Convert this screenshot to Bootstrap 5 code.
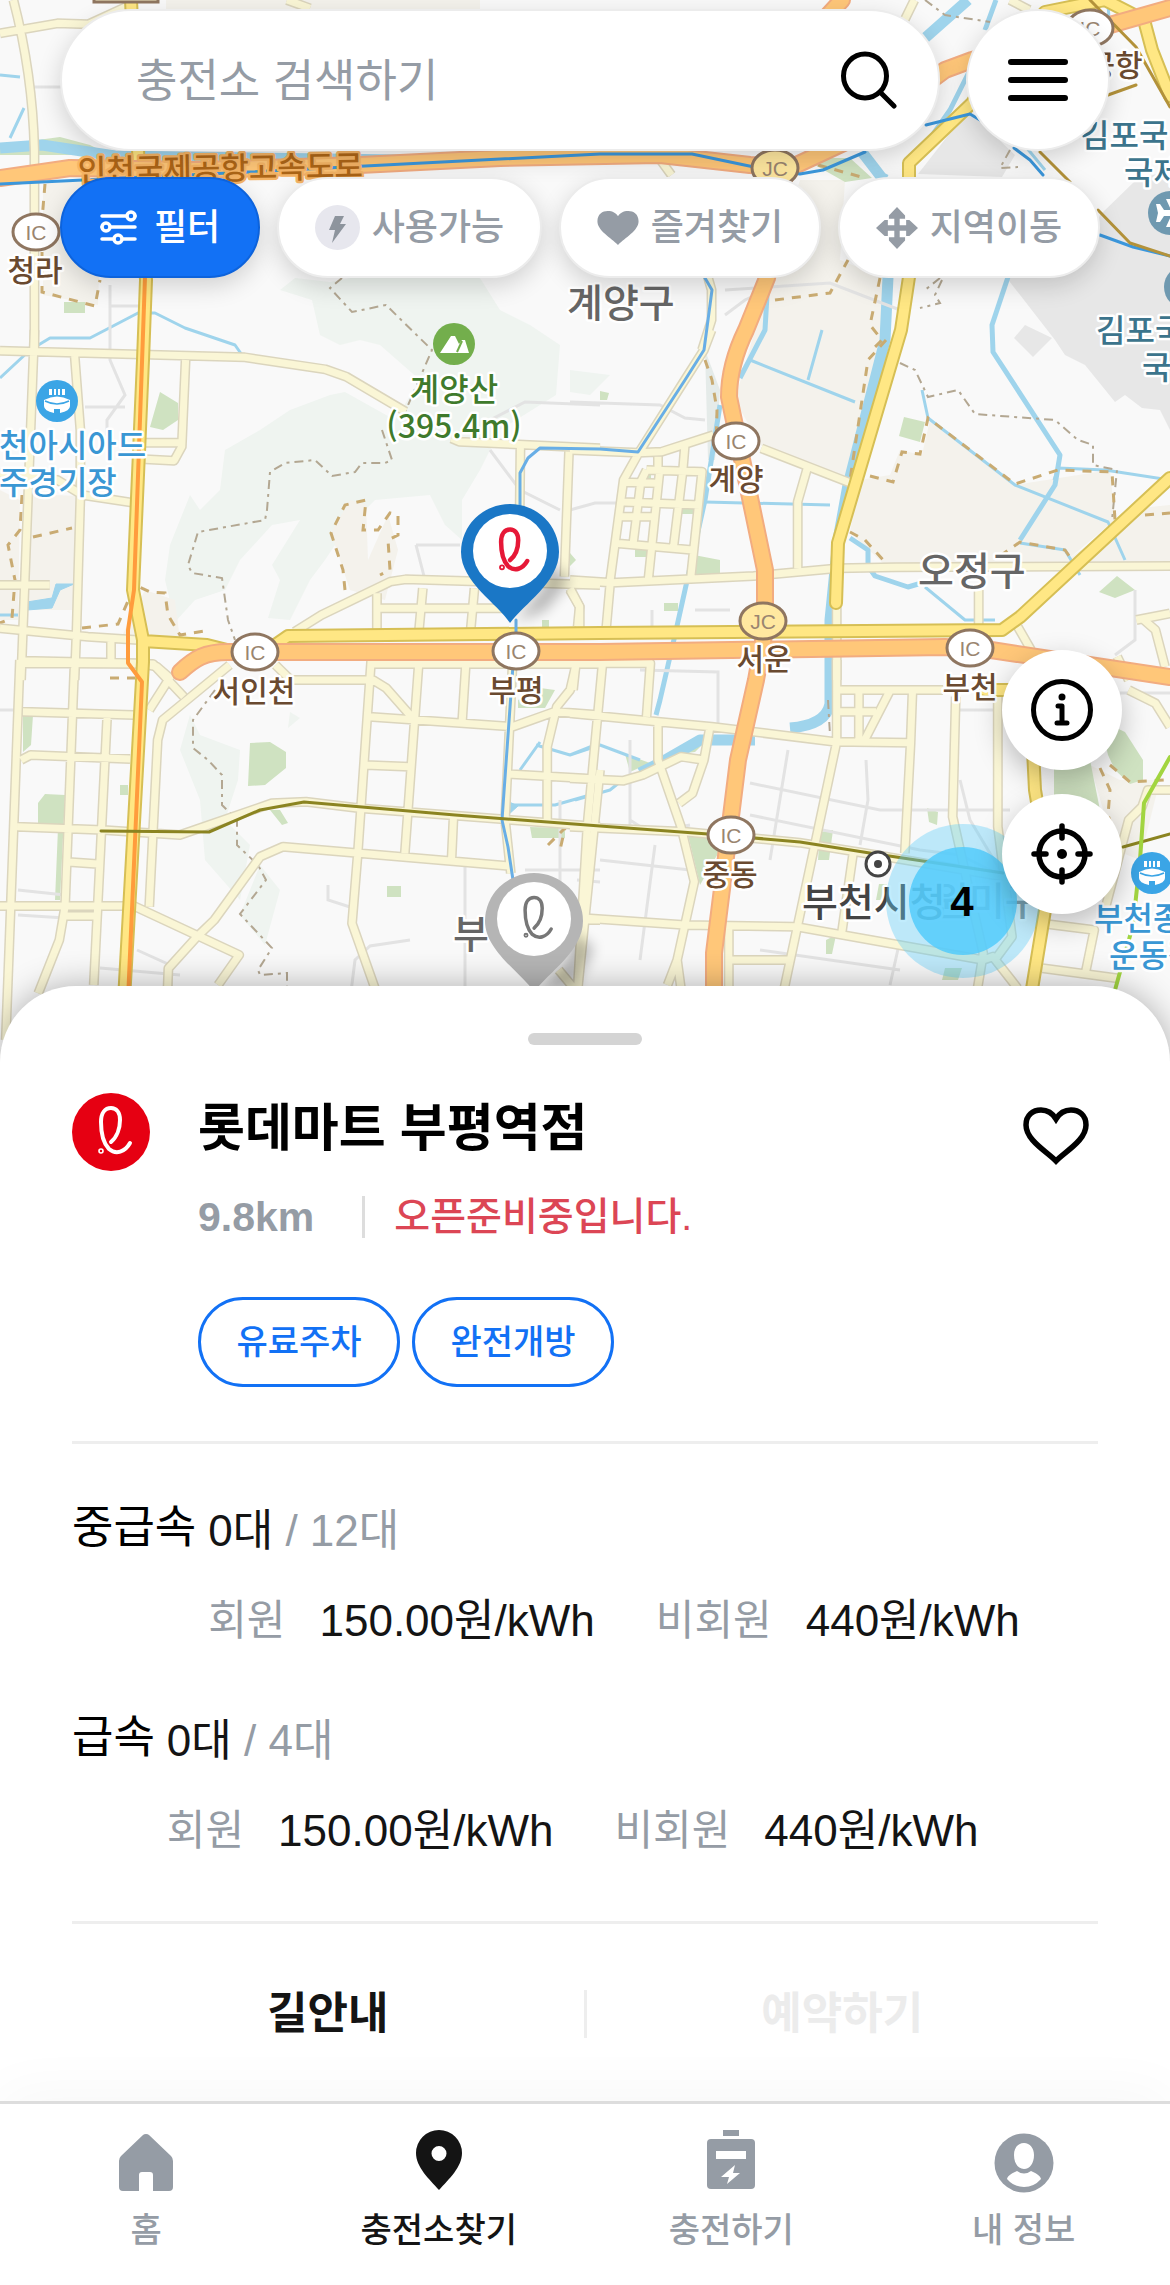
<!DOCTYPE html>
<html lang="ko">
<head>
<meta charset="utf-8">
<meta name="viewport" content="width=device-width, initial-scale=1">
<title>충전소찾기</title>
<link href="https://cdn.jsdelivr.net/npm/bootstrap@5.3.0/dist/css/bootstrap.min.css" rel="stylesheet">
<style>
  :root { --blue: #1271f5; --gray: #959ca5; --ink: #141414; --line: #eee; }
  body { font-family: "Liberation Sans", "Noto Sans CJK KR", sans-serif; color: var(--ink); background: #fff; }
  button, input { font-family: inherit; }
  button:focus-visible { outline: 3px solid var(--blue); }

  /* map canvas */
  .map-area { background: #f9f9f9; overflow: hidden; }
  .map-area > svg { display: block; width: 100%; height: auto; font-family: "Noto Sans CJK KR", sans-serif; }
  .map-area path { vector-effect: non-scaling-stroke; }
  .lbl text { font-size: 30px; font-weight: 500; paint-order: stroke; stroke: #fff; stroke-width: 5px; stroke-linejoin: round; }
  .lbl .poi text { font-size: 32px; }
  .lbl .gu { font-size: 39px; }
  .ramp { font: 21px "Liberation Sans", sans-serif; text-anchor: middle; fill: #9a8570; }

  /* floating controls */
  .topbar { padding: 9px 60px 0; }
  .search-row { gap: 26px; margin-bottom: 26px; }
  .floating { background: #fff; border: 2px solid #ececec; box-shadow: 0 8px 24px rgba(0,0,0,.16); }
  .search-pill { height: 142px; padding: 0 40px 0 74px; }
  .search-pill input { font-size: 45px; line-height: 64px; padding: 4px 0 0; color: var(--ink); }
  .search-pill input::placeholder { color: var(--gray); opacity: 1; }
  .menu-btn { width: 144px; height: 142px; }
  .chips { gap: 17px; padding-right: 10px; }
  .chip { height: 101px; font-size: 36px; line-height: 52px; font-weight: 500; color: var(--gray); gap: 12px; }
  .chip-on { width: 200px; background: var(--blue); border-color: #0d63dc; color: #fff; gap: 17px; }
  .map-tools { top: 650px; right: 48px; gap: 24px; }
  .tool { width: 120px; height: 120px; background: #fff; box-shadow: 0 10px 28px rgba(0,0,0,.25); }

  /* bottom sheet */
  .sheet { margin-top: -76px; padding: 47px 72px 0; border-radius: 76px 76px 0 0; background: #fff; box-shadow: 0 0 34px rgba(0,0,0,.3); }
  .grip { width: 114px; height: 12px; background: #d4d4d4; }
  .station { margin-top: 48px; gap: 48px; }
  .station h1 { font-size: 51px; line-height: 72px; color: #000; }
  .meta { margin-top: 31px; line-height: 42px; }
  .dist { font-size: 41px; color: var(--gray); }
  .bar { width: 3px; height: 42px; background: #ddd; margin: 0 29px 0 48px; }
  .state { font-size: 39px; font-weight: 500; color: #dc4655; }
  .tags { margin-top: 59px; gap: 12px; }
  .tag { width: 202px; height: 90px; border: 3px solid var(--blue); color: var(--blue); font-size: 34px; font-weight: 500; }
  .like { margin-top: 8px; margin-right: 9px; }
  .rule { height: 3px; background: var(--line); }
  .details { margin-top: 54px; }
  .speeds { padding: 60px 0 63px; }
  .speed { gap: 12px; }
  .speed + .speed { margin-top: 66px; }
  .speed h2 { font-size: 45px; line-height: 48px; color: #000; }
  .count { font-size: 44px; line-height: 54px; }
  .prices { margin-top: 36px; font-size: 44px; line-height: 54px; }
  .who { font-size: 42px; color: var(--gray); margin-right: 34px; }
  .cost { margin-right: 61px; }
  .soft { color: var(--gray); }
  .actions { margin-top: 66px; padding-bottom: 63px; }
  .actions .btn { font-size: 44px; line-height: 48px; color: var(--ink); }
  .actions .btn:disabled { color: #ececec; opacity: 1; }
  .split { width: 3px; background: var(--line); }

  /* tab bar */
  .tabs { border-top: 3px solid #ddd; background: #fff; padding: 25px 0 29px; box-shadow: 0 -8px 60px rgba(0,0,0,.035); position: relative; }
  .tabs a { color: var(--gray); font-size: 34px; line-height: 48px; font-weight: 500; text-decoration: none; gap: 13px; }
  .tabs a.active { color: var(--ink); }
</style>
</head>
<body>

<main>
<section class="map-area position-relative">
  <svg viewBox="0 0 1170 1062" role="img" aria-label="지도">
    <defs>
      <g id="roads">
        <g transform="scale(.38265 .33333)">
          <path d="M35 0Q85 220 90 450V1050M0 100L150 70L230 73L330 20M750 0L810 25"/>
        </g>
        <g transform="translate(570 0) scale(.38265 .33333)">
          <path d="M230 470L265 525M360 830L370 870V960L345 1050M900 0L870 70M1150 0L1200 30"/>
        </g>
        <g transform="translate(0 330) scale(.38265 .33333)">
          <path d="M90 0L85 150L60 900L55 1050M0 62L640 82L850 118L905 140L1060 245M195 75L210 300V500L200 900L195 1050M485 90L475 350L455 392L380 388M380 338H475M0 430L150 450L215 495L345 518M0 765H130M0 895L230 920L360 930M60 992L360 1000L410 1010L450 1050M290 935V1000M1180 325L1200 335L1568 355M1360 350L1358 560M1487 365L1475 740M770 905L840 855L1020 755L1060 748L1568 765M985 790V900M1105 775L1095 900M1240 775L1230 900M985 835H1340M1490 775L1515 830V900"/>
        </g>
        <g transform="translate(570 330) scale(.38265 .33333)">
          <path d="M0 750L110 758L480 738L700 715L850 712L1568 708M0 360L180 368L300 150L350 60L370 0M180 368L240 365L375 315M500 355L735 460M620 415L595 515V715M180 368L140 450L105 750M230 380V420M300 350L295 420L270 655M200 420L345 425L315 750M200 420L185 455L165 640M235 415L205 745M140 457L230 460M125 515L340 525M125 560H215M120 640L320 660M105 760L95 890M0 780L25 830L20 890M697 830V1050M1068 780V885M1170 890L1205 960M1480 870L1568 850M1500 870L1530 900L1555 1010M1430 980L1460 1050"/>
        </g>
        <g transform="translate(0 660) scale(.38265 .33333)">
          <path d="M52 0L15 1140M195 0L170 740L155 840L100 1000M60 10L400 12L480 110M60 155L350 165M280 170L245 975M55 300L80 285L340 297M45 500L270 510L470 525L710 430L800 425L940 445L1568 500M600 15L425 180L412 240L390 740M440 60L390 150M170 605L255 612M0 738H350L625 885L570 975M165 768H250M515 830L440 925L438 985M515 830L560 780L680 590L740 560L1330 618M720 15L760 60H975L1010 85L1075 170M970 0L935 580L920 790L980 985M975 12H1568M1095 0L1058 580M1218 0L1208 180M965 170L1340 200L1450 155L1568 165M955 315L1070 320M1185 475L1180 600M1340 0L1320 480L1335 640M1505 15L1490 90L1455 140L1430 260V490M1325 342L1568 358M1568 330L1510 985M1530 780H1568M1460 930L1500 985"/>
        </g>
        <g transform="translate(570 660) scale(.38265 .33333)">
          <path d="M0 10H210L200 170M85 10L45 500L20 985M0 160L230 185L370 200L690 245L890 248M15 15L8 90M230 185V300L290 500L325 665L280 900L290 985M365 205L350 300L290 290L190 345L140 362L0 355M350 300L320 400L285 430M0 500L300 515L600 548L800 585L1130 650M45 775L300 795L590 800L860 855L1080 900L1105 890L1170 985M415 800V985M415 900H570M697 0V245L560 985M705 90H975M755 90V245M705 155H800M835 95L770 240M895 95L890 250L875 580M1008 110L1000 470L1080 880L1065 985M1118 110V500L1155 830L1110 900M740 580L710 820M1230 790L1370 810L1345 950M1235 925L1430 955M280 900L255 975M1460 90L1530 130L1568 200M1568 390H1510L1495 440L1460 480L1400 740"/>
        </g>
      </g>
      <path id="arterial" d="M131 0L138 150L146 280L143 360L133 590L143 640L143 662L124 1000M143 641L207 645L235 652L275 645L288 636L600 633L1002 630L1020 617L1170 478M985 690H1030L1035 790L1045 850V910L1031 995M1170 96L1152 50L1144 20L1105 0L1045 12L1000 60L972 103L909 163V277L901 330L838 543L836 603"/>
      <path id="express" d="M0 178L70 168L200 170L360 165L500 158L660 155L750 165L790 168L850 140L945 70L972 60L1110 25L1170 8M842 0L820 24M785 175L767 278L746 330Q729 365 729 397L738 440L754 517L765 570V630L756 680L738 760L714 953V1000M180 672C195 658 205 652 228 652H600L945 647L991 650L1170 677"/>
      <path id="ell" d="M39 49C45 44 48 35 48 27C48 19 44 15 39 15C33 15 29 20 29 29C29 41 31 50 37 56C44 62 53 59 58 50"/>
      <g id="stadium"><circle r="21" fill="#3ba5e6"/><path fill="#fff" d="M-8-12h3v6h-3zM-3-12h2v6h-2zM1-12h2v6h-2zM5-12h3v6h-3zM-13-1Q0-8 13-1V5Q13 10 3 12V8H-3V12Q-13 10-13 5z"/><path d="M-12 0Q0 6 12 0" fill="none" stroke="#3ba5e6" stroke-width="1.5"/></g>
      <g id="plane"><circle r="22" fill="#6f99b0"/><path fill="#fff" d="M-14-9L-10-9L-6-3L1-3L-4-14H0L8-3H18V3H8L0 14H-4L1 3H-6L-10 9H-14L-12 0z"/></g>
      <filter id="soft" x="-30%" y="-30%" width="180%" height="160%"><feGaussianBlur stdDeviation="7"/></filter>
    </defs>

    <rect width="1170" height="1062" fill="#f9f9f9"/>

    <!-- wooded hills -->
    <g fill="#eff4f0">
      <path d="M280 290L295 278L330 282L350 278L480 278L500 310L530 325L560 345L556 395L500 430L480 470L462 500V540L445 525L430 495L375 500L345 530L325 560L310 580L290 620L268 618L280 580L272 565L300 520L272 525L240 560L225 590L195 600L175 622L165 580L170 545L190 495L200 510L220 490L225 450L260 430L290 410L330 395L345 392L395 420L420 380L380 345L360 340L340 345L320 335L312 300z"/>
      <path d="M190 715L200 735L240 750L238 780L225 820L250 845L240 900L205 860L200 800L180 750zM260 865L280 890L265 945L240 915zM290 712L300 718L288 728z"/>
      <path d="M570 370L610 375L590 395L570 392z"/>
    </g>
    <!-- farmland -->
    <g fill="#f4f2ec">
      <path d="M43 182L102 182L98 305L43 295zM166 0H480V10H166zM0 490L20 500L18 620H0zM28 494L80 496L78 610H28zM350 500L366 504L368 560L388 515L398 550L385 600L350 590L331 533zM120 640L145 590L175 600L180 640z"/>
      <path d="M800 180L845 180L840 260L890 280L880 380L855 490L760 445L735 400L755 330L780 240zM860 480L890 475L900 450L922 455L930 420L985 460L1015 485L1110 470L1115 520L1060 566L885 565L850 532zM1140 508L1170 505V565H1060z"/>
      <path d="M1090 765L1120 780L1160 780L1140 860L1115 850z"/>
    </g>
    <path fill="#e7e7e7" d="M968 110L1015 155L1002 177L918 174zM1170 170L1136 180L1100 215L1092 235L1006 277L1055 340L1065 355L1085 365L1115 402L1125 395L1142 408L1160 410L1170 430zM1014 338L1025 325L1052 338L1033 357z"/>
    <path fill="#e5ebe9" d="M705 350L720 390L715 460L708 460z"/>
    <!-- parks -->
    <g fill="#cfe2c1">
      <path d="M0 145L60 137L90 145L110 155H0zM64 302H85V313H64zM160 392L178 403V420L163 430L150 427zM250 743L270 742L286 752V768L265 785L248 786zM23 715H33L31 745L23 752zM45 794L65 795L60 900H55L58 828H38V803zM120 785H128V795H120zM387 886H401V897H387zM270 810H280L288 823L282 825zM518 700L540 688L555 690L545 708H518zM530 827L565 828V838H532zM542 620H549V628H542zM570 553L576 560L570 566z"/>
      <path d="M820 158H850L872 178L845 182L815 165zM904 417L925 422L920 442L899 436zM694 555L720 560V577L692 579zM664 603H678V611H664zM645 475H651V483H645zM680 508H694V514H680zM635 550H648V557H635zM1117 576L1135 590L1115 598L1099 592zM600 391L609 393L607 400H600zM688 835H710L720 850L700 885zM625 754L650 763L630 772zM670 755L685 743L705 742L695 752zM1100 720L1125 732L1143 760V780L1130 784L1115 770L1108 755zM1054 760H1090L1100 810L1085 800L1070 795H1054zM820 832L833 830L829 860H818zM879 884H887V900H876zM927 808L938 812L937 825L929 822zM826 940L836 935L832 954H826zM945 968L962 968L958 980H942z"/>
    </g>
    <!-- water -->
    <g fill="none" stroke="#9fd4ec" stroke-linejoin="round">
      <path stroke-width="11" d="M0 148L42 145L115 156L400 160M968 0L925 38M862 152L882 178L886 180M888 277L885 340L848 485L838 540L830 620V704Q826 725 790 728M755 740L700 740L660 763L640 773"/>
      <path stroke-width="5" d="M996 0L985 30M970 70L950 110L915 160M1008 277L992 325L993 352L1060 455L1055 485L1020 540M768 278L765 330L740 378M720 405L705 500L675 635L660 700L656 715M850 538L868 550V566L875 576L908 587L925 582"/>
      <path stroke-width="3" d="M0 75L20 77M24 108L10 138M0 378L30 350L50 338L90 338L115 325L138 313L155 313L185 328L235 345L242 355M750 360L855 402M705 502L830 505M922 390L928 418L1015 485L1108 522L1125 560M1020 543L1065 550L1080 575M1054 480L1058 468L1105 470L1170 480M925 587L965 620L995 620M536 745L570 755L595 745M505 805L555 805L590 795M540 742L520 770M570 755L600 745L640 760M575 800L610 790L620 782M822 330L808 380M1108 5L1110 30M1045 170L1012 130M18 615H0"/>
      <path stroke-width="1" fill="#9fd4ec" d="M27 602L52 598L56 584H74L60 590L52 608L27 610zM505 800L518 806L508 815z"/>
    </g>
    <!-- local streets -->
    <path fill="none" stroke="#e3e3e3" stroke-width="3" d="M32 87H62M110 285V360L125 395L107 420V450M85 407H125M110 306H145M490 420L525 402L600 405M570 402L660 405L685 418L705 420M490 450L520 490L560 510M416 545L425 580M416 545H460M570 510L595 503H640M0 710H18M18 890L65 895M18 915L65 918M137 950L170 965L172 1000M100 968L180 975M465 865V1000M328 885V900L350 907M410 940L370 946L355 960L350 1000M725 290L830 283L900 310M725 315L745 300L760 293M730 610H695M652 610V632M640 670L718 672V730M1135 590V640L1115 655M1000 710H960M788 750L770 860M866 760L868 800L860 845M750 783L880 810L1010 810M750 815L920 850L960 855L1010 880M960 780L970 820L1000 870M630 820L650 833L690 825M630 740V830M600 860L690 870M655 845L640 960M810 900L850 910M900 940L890 985M760 950L900 970M577 880L600 882M1120 693H1170M525 870H600M560 800V940"/>
    <!-- district borders -->
    <g fill="none" stroke="#b3a792" stroke-width="2" stroke-dasharray="9 5 3 5">
      <path d="M342 278L330 288L352 312L386 305L432 350L405 412M382 430L392 460L385 463H362L355 472L332 476L315 460L285 463L270 472L267 510L265 520L198 532L188 565L192 573L222 578L228 620L235 640M215 690L193 720V748L208 760L222 775V805L237 820V845L258 865L266 880L240 914L272 948L258 970L260 975L287 973V1000M900 363L915 370L928 397L958 390L975 414L1055 420L1078 440L1093 445V465L1117 470L1112 520M940 278L925 290M925 0L945 15L990 22M1010 150L1000 168L1018 167M942 280L935 295L940 303L920 308M828 700L830 735"/>
    </g>
    <g fill="none" stroke="#c9ab72" stroke-width="3" stroke-dasharray="9 8">
      <path d="M45 184L42 220V292L95 306L100 280M22 495L20 530L8 545L15 580L12 618L0 623M33 537L72 528M82 628L118 624L135 585L150 592L165 593L168 615L180 635L210 630M345 590L343 570L331 533L345 505L366 500L363 530L378 530L390 513L398 515V535L388 540L390 570L380 575M705 360L712 380L717 410L716 450M886 340L868 360L850 480M870 476L893 482L902 452L920 454L928 418L1015 484L1058 470L1112 472L1115 520M850 532L865 540L885 562M1000 556L1020 542L1065 550L1072 560M775 300L830 293L848 260M880 278L870 325L882 340L872 350M818 165L865 178M1145 515L1170 513M1100 768L1110 790L1108 815L1120 850M1110 765L1130 782L1165 780M548 845L565 828L560 850M110 678H135"/>
    </g>

    <g fill="none" stroke-linejoin="round">
      <use href="#roads" stroke="#dbd5bd" stroke-width="10"/>
      <use href="#roads" stroke="#faf6d6" stroke-width="7"/>
    </g>
    <g fill="none" stroke-linejoin="round" stroke-linecap="round">
      <use href="#arterial" stroke="#d6bf55" stroke-width="14"/>
      <use href="#arterial" stroke="#ffe784" stroke-width="10"/>
      <use href="#express" stroke="#f2ac80" stroke-width="18"/>
      <use href="#express" stroke="#ffc779" stroke-width="14"/>
      <path stroke="#ff9c3d" stroke-width="4" d="M145 277L134 590L128 630V663L142 682L128 1000"/>
      <path stroke="#68aee6" stroke-width="3" d="M520 520V473L528 458L540 448L600 449L638 452L685 380L704 350L712 290L705 278M516 620V640M513 665L502 820L508 847L513 880"/>
      <path stroke="#3b97dc" stroke-width="3" d="M0 184L249 172L600 154L692 154L754 167L800 174L823 170L865 152M926 125L970 114L980 120M1014 148L1030 160L1043 175M1100 235L1133 247L1170 256"/>
      <path stroke="#b3923a" stroke-width="3" d="M1040 152L1070 182M1098 210L1130 243L1170 256M1090 0L1136 47L1170 107M1108 95L1136 85"/>
      <path stroke="#8b8421" stroke-width="3" d="M101 831L209 832L260 810L304 802L455 815L600 826L708 834L800 842L876 854L1003 873M1123 847L1170 834"/>
      <path stroke="#a2d540" stroke-width="4" d="M1170 757L1144 803L1140 860L1133 925L1115 990"/>
    </g>
    <path d="M94 -5H158V2H94z" fill="#f4efc6" stroke="#8f7660" stroke-width="3"/>

    <!-- ramps and junctions -->
    <g fill="#fff" stroke="#8f7660" stroke-width="3">
      <ellipse cx="36" cy="232" rx="23" ry="18"/><ellipse cx="1090" cy="28" rx="23" ry="18"/>
      <ellipse cx="255" cy="652" rx="23" ry="18"/><ellipse cx="516" cy="651" rx="23" ry="18"/>
      <ellipse cx="736" cy="441" rx="23" ry="18"/><ellipse cx="970" cy="648" rx="23" ry="18"/>
      <ellipse cx="731" cy="835" rx="23" ry="18"/>
      <ellipse cx="763" cy="621" rx="23" ry="18" fill="#ffe8a0"/><ellipse cx="775" cy="168" rx="23" ry="18" fill="#ffe8a0"/>
      <ellipse cx="878" cy="864" rx="12" ry="12" stroke="#444"/>
    </g>
    <circle cx="878" cy="864" r="4" fill="#444"/>
    <g class="ramp">
      <text x="36" y="240">IC</text><text x="1090" y="36">IC</text><text x="255" y="660">IC</text><text x="516" y="659">IC</text><text x="736" y="449">IC</text><text x="970" y="656">IC</text><text x="731" y="843">IC</text><text x="763" y="629">JC</text><text x="775" y="176">JC</text>
    </g>

    <use href="#stadium" x="57" y="401"/><use href="#stadium" x="1152" y="873"/>
    <use href="#plane" x="1170" y="213"/><use href="#plane" x="1186" y="287"/>
    <circle cx="454" cy="344" r="21" fill="#73ae4c"/><path fill="#fff" d="M440 353L451 336H455L459 344L462 340H465L469 353z"/><path d="M457 352L462 341" stroke="#73ae4c" stroke-width="2"/>

    <g class="lbl">
      <g fill="#6a4a30" text-anchor="middle">
        <text x="35" y="281">청라</text><text x="254" y="702">서인천</text><text x="516" y="701">부평</text><text x="736" y="490">계양</text><text x="764" y="670">서운</text><text x="970" y="698">부천</text><text x="730" y="885">중동</text><text x="1115" y="76">공항</text>
      </g>
      <g fill="#666">
        <text class="gu" x="567" y="317">계양구</text><text class="gu" x="918" y="585">오정구</text><text class="gu" x="453" y="948">부</text><text class="gu" x="933" y="915" fill="#888">원미구</text>
      </g>
      <text class="gu" x="802" y="916" fill="#444">부천시청</text>
      <g class="poi">
        <g fill="#3f7a2c" text-anchor="middle"><text x="454" y="401">계양산</text><text x="454" y="438">(395.4m)</text></g>
        <g fill="#3a97d4"><text x="-1" y="457">천아시아드</text><text x="-1" y="494">주경기장</text><text x="1094" y="930">부천종</text><text x="1109" y="967">운동장</text></g>
        <g fill="#3c748c"><text x="1080" y="147">김포국</text><text x="1124" y="184">국제</text><text x="1096" y="342">김포국</text><text x="1142" y="379">국</text></g>
        <text x="78" y="182" transform="rotate(-1 80 184)" style="fill:#ae6617;stroke:#f6b566;font-size:31px">인천국제공항고속도로</text>
      </g>
    </g>

    <!-- charger cluster and pins -->
    <circle cx="963" cy="901" r="77" fill="#5ccdfb" opacity=".38"/>
    <circle cx="963" cy="901" r="54" fill="#54cbfc" opacity=".85"/>
    <text x="962" y="916" text-anchor="middle" style="font:bold 42px 'Liberation Sans',sans-serif">4</text>

    <path d="M515 622L545 585V560L570 580L545 610z" fill="#000" opacity=".28" filter="url(#soft)"/>
    <path d="M510 623C498 604 461 582 461 552A49 48 0 0 1 559 552C559 582 524 604 510 623z" fill="#1a77c6"/>
    <circle cx="510" cy="551" r="37" fill="#fff"/>
    <g transform="translate(475 516) scale(.9)" stroke="#e61837" stroke-width="4.5" fill="none" stroke-linecap="round"><use href="#ell"/><circle cx="30" cy="57" r="1"/></g>
    <path d="M539 990L569 955V930L594 948L575 985z" fill="#000" opacity=".28" filter="url(#soft)"/>
    <path d="M534 992C522 973 485 951 485 921A49 48 0 0 1 583 921C583 951 548 973 534 992z" fill="#b5b5b5"/>
    <circle cx="534" cy="919" r="37" fill="#fff"/>
    <g transform="translate(499 884) scale(.9)" stroke="#777" stroke-width="3.5" fill="none" stroke-linecap="round"><use href="#ell"/><circle cx="30" cy="57" r="1"/></g>
  </svg>

  <div class="topbar position-absolute top-0 start-0 w-100">
    <form class="search-row d-flex" role="search">
      <div class="search-pill floating rounded-pill flex-grow-1 d-flex align-items-center">
        <input class="form-control border-0 shadow-none bg-transparent" type="text" placeholder="충전소 검색하기" aria-label="충전소 검색하기">
        <button class="btn p-0 border-0 flex-shrink-0" type="button" aria-label="검색">
          <svg width="58" height="58" viewBox="0 0 58 58" fill="none" stroke="#000" stroke-width="5" stroke-linecap="round" class="d-block"><ellipse cx="25" cy="25" rx="21.5" ry="22"/><path d="M40 41L54 55"/></svg>
        </button>
      </div>
      <button class="menu-btn floating rounded-circle flex-shrink-0 p-0" type="button" aria-label="메뉴">
        <svg width="60" height="44" viewBox="0 0 60 44" stroke="#000" stroke-width="6" stroke-linecap="round"><path d="M3 4H57M3 22H57M3 40H57"/></svg>
      </button>
    </form>
    <div class="chips d-flex">
      <button class="chip chip-on floating rounded-pill d-flex align-items-center justify-content-center p-0" type="button">
        <svg width="37" height="37" viewBox="0 0 37 37" fill="#1271f5" stroke="#fff" stroke-width="3.5" stroke-linecap="round"><path d="M2 7H35M2 18H35M2 30H35"/><circle cx="31" cy="7" r="4"/><circle cx="6" cy="18" r="4"/><circle cx="18" cy="30" r="4"/></svg>필터
      </button>
      <button class="chip floating rounded-pill d-flex align-items-center justify-content-center flex-fill p-0" type="button">
        <svg width="45" height="45" viewBox="0 0 45 45"><circle cx="22.5" cy="22.5" r="22.5" fill="#e7e7ee"/><path d="M20 11H29L25 19H31L17 38L20 25H14z" fill="#8d949d"/></svg>사용가능
      </button>
      <button class="chip floating rounded-pill d-flex align-items-center justify-content-center flex-fill p-0" type="button">
        <svg width="42" height="36" viewBox="0 0 40 35"><path d="M20 34C13 27 0 20 0 11C0 4 5 1 10 1C15 1 18 3 20 6C22 3 25 1 30 1C35 1 40 4 40 11C40 20 27 27 20 34z" fill="#959ca5"/></svg>즐겨찾기
      </button>
      <button class="chip floating rounded-pill d-flex align-items-center justify-content-center flex-fill p-0" type="button">
        <svg width="42" height="42" viewBox="0 0 39 39" fill="#959ca5"><path d="M19.500 0L27 8V11H22V17H28V12H31L39 19.500L31 27H28V22H22V28H27V31L19.500 39L12 31V28H17V22H11V27H8L0 19.500L8 12H11V17H17V11H12V8z"/></svg>지역이동
      </button>
    </div>
  </div>

  <div class="map-tools position-absolute d-flex flex-column">
    <button class="tool btn rounded-circle border-0 p-0" type="button" aria-label="정보">
      <svg width="64" height="64" viewBox="0 0 64 64" fill="none" stroke="#000"><circle cx="32" cy="32" r="28.500" stroke-width="5"/><circle cx="32" cy="19" r="3.500" fill="#000" stroke="none"/><path d="M28 28H32V44M27 45H37" stroke-width="5" stroke-linecap="round" stroke-linejoin="round"/></svg>
    </button>
    <button class="tool btn rounded-circle border-0 p-0" type="button" aria-label="현재 위치">
      <svg width="64" height="64" viewBox="0 0 64 64" fill="none" stroke="#000" stroke-width="5.500" stroke-linecap="round"><circle cx="32" cy="32" r="23"/><path d="M32 4V16M32 48V60M4 32H16M48 32H60"/><circle cx="32" cy="32" r="5" fill="#000" stroke="none"/></svg>
    </button>
  </div>
</section>

<section class="sheet position-relative">
  <div class="grip rounded-pill mx-auto"></div>
  <div class="station d-flex align-items-start">
    <svg class="flex-shrink-0" width="78" height="78" viewBox="0 0 78 78" role="img" aria-label="롯데마트"><circle cx="39" cy="39" r="39" fill="#e60012"/><g stroke="#fff" stroke-width="4" fill="none" stroke-linecap="round"><use href="#ell"/><circle cx="29" cy="58" r=".8"/></g></svg>
    <div class="flex-grow-1">
      <h1 class="fw-bold mb-0">롯데마트 부평역점</h1>
      <div class="meta d-flex align-items-center">
        <span class="dist fw-bold">9.8km</span><span class="bar"></span><span class="state">오픈준비중입니다.</span>
      </div>
      <div class="tags d-flex">
        <span class="tag rounded-pill d-flex align-items-center justify-content-center">유료주차</span>
        <span class="tag rounded-pill d-flex align-items-center justify-content-center">완전개방</span>
      </div>
    </div>
    <button class="like btn border-0 p-0" type="button" aria-label="즐겨찾기 추가">
      <svg class="d-block" width="66" height="66" viewBox="0 0 66 66" fill="none" stroke="#000" stroke-width="5.500"><path d="M33 60C23 50 3 39 3 24C3 14 10 9 18 9C25 9 30 13 33 18C36 13 41 9 48 9C56 9 63 14 63 24C63 39 43 50 33 60z"/></svg>
    </button>
  </div>

  <div class="details">
    <div class="rule"></div>
    <div class="speeds">
      <div class="speed d-flex">
        <h2 class="fw-normal mb-0">중급속</h2>
        <div>
          <div class="count">0대 <span class="soft">/ 12대</span></div>
          <div class="prices d-flex"><span class="who">회원</span><span class="cost">150.00원/kWh</span><span class="who">비회원</span><span>440원/kWh</span></div>
        </div>
      </div>
      <div class="speed d-flex">
        <h2 class="fw-normal mb-0">급속</h2>
        <div>
          <div class="count">0대 <span class="soft">/ 4대</span></div>
          <div class="prices d-flex"><span class="who">회원</span><span class="cost">150.00원/kWh</span><span class="who">비회원</span><span>440원/kWh</span></div>
        </div>
      </div>
    </div>
    <div class="rule"></div>
  </div>

  <div class="actions d-flex">
    <button class="btn border-0 p-0 fw-bold flex-fill w-50" type="button">길안내</button>
    <span class="split flex-shrink-0"></span>
    <button class="btn border-0 p-0 fw-bold flex-fill w-50" type="button" disabled>예약하기</button>
  </div>
</section>
</main>

<nav class="tabs row g-0 text-center" aria-label="주 메뉴">
  <a class="col d-flex flex-column align-items-center" href="#home">
    <svg width="64" height="64" viewBox="0 0 64 64" fill="currentColor"><path d="M32 5Q34 5 35 6L57 27Q59 29 59 32V58Q59 62 55 62H39V46Q39 43 36 43H28Q25 43 25 46V62H9Q5 62 5 58V32Q5 29 7 27L29 6Q30 5 32 5z"/></svg>홈
  </a>
  <a class="col d-flex flex-column align-items-center active" href="#find" aria-current="page">
    <svg width="64" height="64" viewBox="0 0 64 64" fill="currentColor"><path fill-rule="evenodd" d="M32 1A23 23 0 0 1 55 24C55 38 42 50 32 61C22 50 9 38 9 24A23 23 0 0 1 32 1zM32 17A7.500 7.500 0 1 0 32 32A7.500 7.500 0 1 0 32 17z"/></svg>충전소찾기
  </a>
  <a class="col d-flex flex-column align-items-center" href="#charge">
    <svg width="64" height="64" viewBox="0 0 64 64" fill="currentColor"><path d="M24 1H40V7H24z"/><rect x="8" y="10" width="48" height="50" rx="4"/><path fill="#fff" d="M17 22H47V30H17zM36 36L22 48H30L28 55L41 44H34z"/></svg>충전하기
  </a>
  <a class="col d-flex flex-column align-items-center" href="#me">
    <svg width="64" height="64" viewBox="0 0 64 64"><circle cx="32" cy="34" r="29.500" fill="currentColor"/><path fill="#fff" d="M32 14C38 14 42 19 42 26C42 34 38 40 32 40C26 40 22 34 22 26C22 19 26 14 32 14zM15 50C16 46 21 44 25 42Q32 47 39 42C43 44 48 46 49 50Q42 58 32 58Q22 58 15 50z"/></svg>내 정보
  </a>
</nav>

<script src="https://cdn.jsdelivr.net/npm/bootstrap@5.3.0/dist/js/bootstrap.bundle.min.js"></script>
</body>
</html>
